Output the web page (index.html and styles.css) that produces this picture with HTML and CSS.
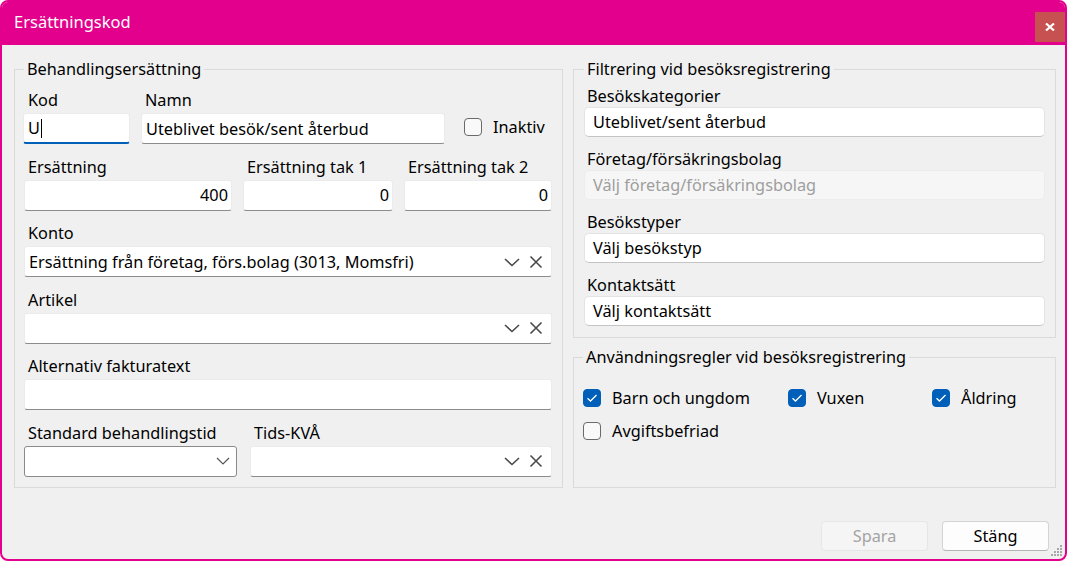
FILE: index.html
```html
<!DOCTYPE html>
<html lang="sv">
<head>
<meta charset="utf-8">
<title>Ersättningskod</title>
<link rel="stylesheet" href="styles.css">
</head>
<body>
<div class="window">
  <div class="titlebar">
    <span class="title">Ersättningskod</span>
    <button class="close" aria-label="Stäng">
      <svg width="10" height="8" viewBox="0 0 10 8"><path d="M1 0.5 L9 7.5 M9 0.5 L1 7.5" stroke="#fff" stroke-width="2.2"/></svg>
    </button>
  </div>
  <div class="content">
    <div class="columns">
      <fieldset class="group left">
        <legend>Behandlingsersättning</legend>
        <div class="fields">
          <div class="row r1">
            <div class="field"><label>Kod</label><div class="input focused">U<span class="caret"></span></div></div>
            <div class="field"><label>Namn</label><div class="input">Uteblivet besök/sent återbud</div></div>
            <div class="check inaktiv"><span class="box"></span><span>Inaktiv</span></div>
          </div>
          <div class="row r2">
            <div class="field"><label>Ersättning</label><div class="input num">400</div></div>
            <div class="field"><label>Ersättning tak 1</label><div class="input num">0</div></div>
            <div class="field"><label>Ersättning tak 2</label><div class="input num">0</div></div>
          </div>
          <div class="field"><label>Konto</label>
            <div class="input combo"><span class="val">Ersättning från företag, förs.bolag (3013, Momsfri)</span>
              <svg class="chev" width="16" height="10" viewBox="0 0 16 10"><path d="M1 2 L8 8.5 L15 2" fill="none" stroke="#4a4a4a" stroke-width="1.6"/></svg>
              <svg class="clr" width="14" height="14" viewBox="0 0 14 14"><path d="M1.5 1.5 L12.5 12.5 M12.5 1.5 L1.5 12.5" stroke="#4a4a4a" stroke-width="1.6"/></svg>
            </div>
          </div>
          <div class="field"><label>Artikel</label>
            <div class="input combo"><span class="val"></span>
              <svg class="chev" width="16" height="10" viewBox="0 0 16 10"><path d="M1 2 L8 8.5 L15 2" fill="none" stroke="#4a4a4a" stroke-width="1.6"/></svg>
              <svg class="clr" width="14" height="14" viewBox="0 0 14 14"><path d="M1.5 1.5 L12.5 12.5 M12.5 1.5 L1.5 12.5" stroke="#4a4a4a" stroke-width="1.6"/></svg>
            </div>
          </div>
          <div class="field"><label>Alternativ fakturatext</label><div class="input"></div></div>
          <div class="row r6">
            <div class="field"><label>Standard behandlingstid</label>
              <div class="select"><svg width="14" height="8" viewBox="0 0 14 8"><path d="M1 1 L7 7 L13 1" fill="none" stroke="#555" stroke-width="1.2"/></svg></div>
            </div>
            <div class="field"><label>Tids-KVÅ</label>
              <div class="input combo"><span class="val"></span>
                <svg class="chev" width="16" height="10" viewBox="0 0 16 10"><path d="M1 2 L8 8.5 L15 2" fill="none" stroke="#4a4a4a" stroke-width="1.6"/></svg>
                <svg class="clr" width="14" height="14" viewBox="0 0 14 14"><path d="M1.5 1.5 L12.5 12.5 M12.5 1.5 L1.5 12.5" stroke="#4a4a4a" stroke-width="1.6"/></svg>
              </div>
            </div>
          </div>
        </div>
      </fieldset>
      <div class="rightcol">
        <fieldset class="group filter">
          <legend>Filtrering vid besöksregistrering</legend>
          <div class="rfields">
            <div class="rfield"><label>Besökskategorier</label><div class="rinput">Uteblivet/sent återbud</div></div>
            <div class="rfield"><label>Företag/försäkringsbolag</label><div class="rinput disabled">Välj företag/försäkringsbolag</div></div>
            <div class="rfield"><label>Besökstyper</label><div class="rinput">Välj besökstyp</div></div>
            <div class="rfield"><label>Kontaktsätt</label><div class="rinput">Välj kontaktsätt</div></div>
          </div>
        </fieldset>
        <fieldset class="group rules">
          <legend>Användningsregler vid besöksregistrering</legend>
          <div class="checks">
            <div class="check"><span class="box on"><svg width="12" height="10" viewBox="0 0 12 10"><path d="M1.5 5.2 L4.5 8 L10.5 2" fill="none" stroke="#fff" stroke-width="1.3"/></svg></span><span>Barn och ungdom</span></div>
            <div class="check"><span class="box on"><svg width="12" height="10" viewBox="0 0 12 10"><path d="M1.5 5.2 L4.5 8 L10.5 2" fill="none" stroke="#fff" stroke-width="1.3"/></svg></span><span>Vuxen</span></div>
            <div class="check"><span class="box on"><svg width="12" height="10" viewBox="0 0 12 10"><path d="M1.5 5.2 L4.5 8 L10.5 2" fill="none" stroke="#fff" stroke-width="1.3"/></svg></span><span>Åldring</span></div>
            <div class="check"><span class="box"></span><span>Avgiftsbefriad</span></div>
          </div>
        </fieldset>
      </div>
    </div>
    <div class="buttons">
      <button class="btn disabled">Spara</button>
      <button class="btn">Stäng</button>
    </div>
    <svg class="grip" width="12" height="12" viewBox="0 0 12 12">
      <g fill="#a8a8a8">
        <rect x="9" y="1" width="2" height="2"/>
        <rect x="6" y="4" width="2" height="2"/><rect x="9" y="4" width="2" height="2"/>
        <rect x="3" y="7" width="2" height="2"/><rect x="6" y="7" width="2" height="2"/><rect x="9" y="7" width="2" height="2"/>
        <rect x="0" y="10" width="2" height="2"/><rect x="3" y="10" width="2" height="2"/><rect x="6" y="10" width="2" height="2"/><rect x="9" y="10" width="2" height="2"/>
      </g>
    </svg>
  </div>
</div>
</body>
</html>
```

FILE: styles.css
```css
* { box-sizing: border-box; }
html, body { margin: 0; padding: 0; }
body {
  background: #ffffff;
  font-family: "Noto Sans", "Segoe UI", sans-serif;
  font-size: 16.3px;
  line-height: 20px;
  color: #000;
  width: 1069px;
  height: 561px;
  overflow: hidden;
}
.window {
  width: 1067px;
  height: 561px;
  border: 2px solid #e3008c;
  border-radius: 8px;
  background: #f0f0f0;
  display: flex;
  flex-direction: column;
  overflow: hidden;
}
.titlebar {
  height: 43px;
  background: #e3008c;
  display: flex;
  align-items: flex-start;
  justify-content: space-between;
  padding: 10px 0 0 12px;
  flex: none;
}
.title {
  color: #fff;
  font-size: 16.5px;
  line-height: 20px;
}
.close {
  width: 30px;
  height: 30px;
  border: 0;
  padding: 0;
  margin: 0;
  background: #c75050;
  display: flex;
  align-items: center;
  justify-content: center;
}
.content {
  flex: 1;
  position: relative;
  padding: 14px 9px 0 12px;
  display: flex;
  flex-direction: column;
}
.columns {
  display: grid;
  grid-template-columns: 549px 483px;
  column-gap: 10px;
  align-items: stretch;
}
.group {
  margin: 0;
  border: 1px solid #dadada;
  min-width: 0;
}
.group legend {
  padding: 0 3px;
  line-height: 20px;
  height: 20px;
}
.left { padding: 11px 10px 10px 9px; }
.fields {
  display: flex;
  flex-direction: column;
  gap: 12.6px;
}
.row { display: grid; align-items: start; }
.r1 { grid-template-columns: 106px 304px auto; column-gap: 11px; }
.r2 { grid-template-columns: 208px 150px 1fr; column-gap: 11px; }
.r6 { grid-template-columns: 213px 1fr; column-gap: 13px; }
.field label {
  display: block;
  height: 20px;
  line-height: 20px;
  padding-left: 4px;
  margin-bottom: 3px;
  white-space: nowrap;
}
.input {
  height: 31px;
  background: #fff;
  border: 1px solid #ebebeb;
  border-bottom: 1px solid #8c8c8c;
  border-radius: 3px;
  padding: 0 4px;
  display: flex;
  align-items: center;
  white-space: nowrap;
  overflow: hidden;
}
.input.focused {
  border-bottom: 2px solid #005fb8;
  margin-left: -1px;
}
.caret {
  display: inline-block;
  width: 1px;
  height: 19px;
  background: #000;
  margin-left: 1px;
}
.input.num { justify-content: flex-end; padding-right: 3px; }
.combo .val { flex: 1; overflow: hidden; }
.combo .chev { margin-right: 9px; flex: none; }
.combo .clr { margin-right: 4px; flex: none; }
.select {
  height: 31px;
  background: #fff;
  border: 1px solid #8a8a8a;
  border-radius: 3px;
  display: flex;
  align-items: center;
  justify-content: flex-end;
  padding-right: 6px;
}
.check {
  display: flex;
  align-items: center;
  height: 20px;
  white-space: nowrap;
}
.inaktiv { margin-top: 27px; margin-left: 8px; }
.box {
  width: 18px;
  height: 18px;
  border: 1px solid #6a6a6a;
  border-radius: 4px;
  background: #f9f9f9;
  margin-right: 11px;
  display: flex;
  align-items: center;
  justify-content: center;
  flex: none;
}
.box.on { background: #005fb8; border-color: #005fb8; }
.rightcol {
  display: flex;
  flex-direction: column;
  gap: 9px;
}
.filter { padding: 7px 10px 11px 10px; }
.rfields { display: flex; flex-direction: column; gap: 12px; }
.rfield label {
  display: block;
  height: 20px;
  line-height: 20px;
  padding-left: 3px;
  margin-bottom: 1px;
}
.rinput {
  height: 30px;
  background: #fff;
  border: 1px solid #e3e3e3;
  border-bottom-color: #c4c4c4;
  border-radius: 5px;
  padding: 0 8px;
  display: flex;
  align-items: center;
}
.rinput.disabled {
  background: #f6f6f6;
  border-color: #ececec;
  color: #9e9e9e;
}
.rules { flex: 1; padding: 21px 9px 10px 9px; }
.checks {
  display: grid;
  grid-template-columns: 205px 144px auto;
  row-gap: 13px;
}
.buttons {
  display: flex;
  justify-content: flex-end;
  gap: 14px;
  margin-top: 33px;
  padding-right: 7px;
}
.btn {
  width: 107px;
  height: 30px;
  font-family: "Noto Sans", "Segoe UI", sans-serif;
  font-size: 16.3px;
  line-height: 20px;
  color: #000;
  background: #fdfdfd;
  border: 1px solid #d4d4d4;
  border-bottom-color: #b4b4b4;
  border-radius: 4px;
  padding: 0;
}
.btn.disabled {
  background: #f5f5f5;
  border-color: #e6e6e6;
  color: #a3a3a3;
}
.grip {
  position: absolute;
  right: 2px;
  bottom: 3px;
}
```
